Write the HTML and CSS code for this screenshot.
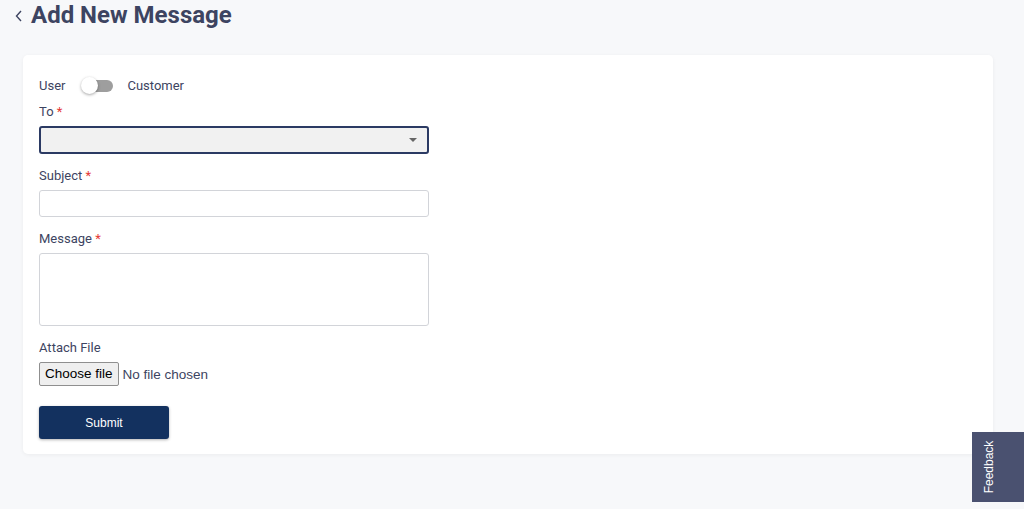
FILE: index.html
```html
<!DOCTYPE html>
<html>
<head>
<meta charset="utf-8">
<link rel="stylesheet" href="styles.css">
</head>
<body>
<div class="page">
  <div class="header">
    <svg class="back" width="10" height="14" viewBox="0 0 10 14"><path d="M7 2 L2.5 7 L7 12" fill="none" stroke="#3d4461" stroke-width="1.4"/></svg>
    <h1 class="title">Add New Message</h1>
  </div>
  <div class="card">
    <div class="toggle-row">
      <span class="lbl">User</span>
      <span class="switch"><span class="track"></span><span class="knob"></span></span>
      <span class="lbl">Customer</span>
    </div>
    <div class="field">
      <label class="lbl">To <span class="req">*</span></label>
      <div class="select"><span class="caret"></span></div>
    </div>
    <div class="field">
      <label class="lbl">Subject <span class="req">*</span></label>
      <div class="input"></div>
    </div>
    <div class="field">
      <label class="lbl">Message <span class="req">*</span></label>
      <div class="textarea"></div>
    </div>
    <div class="field">
      <label class="lbl">Attach File</label>
      <div class="file-row"><span class="choose">Choose file</span><span class="nofile">No file chosen</span></div>
    </div>
    <button class="submit">Submit</button>
  </div>
</div>
<div class="feedback"><span>Feedback</span></div>
</body>
</html>
```
FILE: styles.css
```css
html, body { margin: 0; padding: 0; }
body {
  background: #f7f8fa;
  font-family: Roboto, "Liberation Sans", sans-serif;
  color: #3d4461;
  width: 1024px;
  height: 509px;
  overflow: hidden;
  position: relative;
}
.page { padding: 0 31px 0 23px; }
.header {
  display: flex;
  align-items: center;
  height: 30px;
  padding-left: 1px;
}
.back { margin-left: -10px; margin-right: 7px; margin-top: 2px; }
.title {
  margin: 0;
  font-size: 24px;
  font-weight: 700;
  color: #3d4461;
  line-height: 30px;
}
.card {
  margin-top: 25px;
  background: #fff;
  border-radius: 5px;
  box-shadow: 0 1px 4px rgba(0,0,0,0.05);
  padding: 21px 16px 16px 16px;
  height: 362px;
}
.lbl { font-size: 13px; color: #3d4461; line-height: 18px; }
.req { color: #e53935; }
.toggle-row { display: flex; align-items: center; height: 20px; }
.switch { position: relative; width: 34px; height: 20px; margin: 0 12px 0 16px; display: inline-block; }
.track { position: absolute; left: 4px; top: 4px; width: 28px; height: 12px; border-radius: 6px; background: #9e9e9e; }
.knob { position: absolute; left: 0; top: 1px; width: 17px; height: 17px; border-radius: 50%; background: #fff; box-shadow: 0 1px 3px rgba(0,0,0,0.35); }
.field { display: flex; flex-direction: column; width: 390px; }
.field .lbl { height: 18px; margin-bottom: 5px; }
.toggle-row + .field { margin-top: 7px; }
.select {
  height: 24px;
  border: 2px solid #2b3a63;
  border-radius: 3px;
  background: #f1f1f1;
  position: relative;
  margin-bottom: 13px;
}
.caret {
  position: absolute; right: 10px; top: 10px;
  width: 0; height: 0;
  border-left: 4px solid transparent; border-right: 4px solid transparent;
  border-top: 4px solid #666;
}
.input {
  height: 25px;
  border: 1px solid #d2d4d9;
  border-radius: 3px;
  margin-bottom: 13px;
}
.textarea {
  height: 71px;
  border: 1px solid #d2d4d9;
  border-radius: 3px;
  margin-bottom: 13px;
}
.file-row { display: flex; align-items: center; font-size: 13.5px; }
.choose {
  border: 1px solid #8f8f8f;
  background: #efefef;
  border-radius: 2px;
  padding: 0 5px;
  height: 22px;
  line-height: 22px;
  color: #000;
  font-family: "Liberation Sans", Arial, sans-serif;
}
.nofile { margin-left: 4px; color: #3d4461; font-family: "Liberation Sans", Arial, sans-serif; }
.submit {
  margin-top: 20px;
  width: 130px;
  height: 33px;
  background: #13315f;
  color: #fff;
  border: none;
  border-radius: 3px;
  font-family: "Liberation Sans", Arial, sans-serif;
  font-size: 12px;
  box-shadow: 0 1px 3px rgba(0,0,0,0.3);
}
.feedback {
  position: absolute;
  left: 972px;
  top: 432px;
  width: 52px;
  height: 70px;
  background: #4a5170;
  display: flex;
  align-items: center;
  justify-content: center;
  padding-right: 18px;
  box-sizing: border-box;
}
.feedback span {
  transform: rotate(-90deg);
  color: #fff;
  font-size: 12px;
  white-space: nowrap;
  font-family: "Liberation Sans", Arial, sans-serif;
}
```
